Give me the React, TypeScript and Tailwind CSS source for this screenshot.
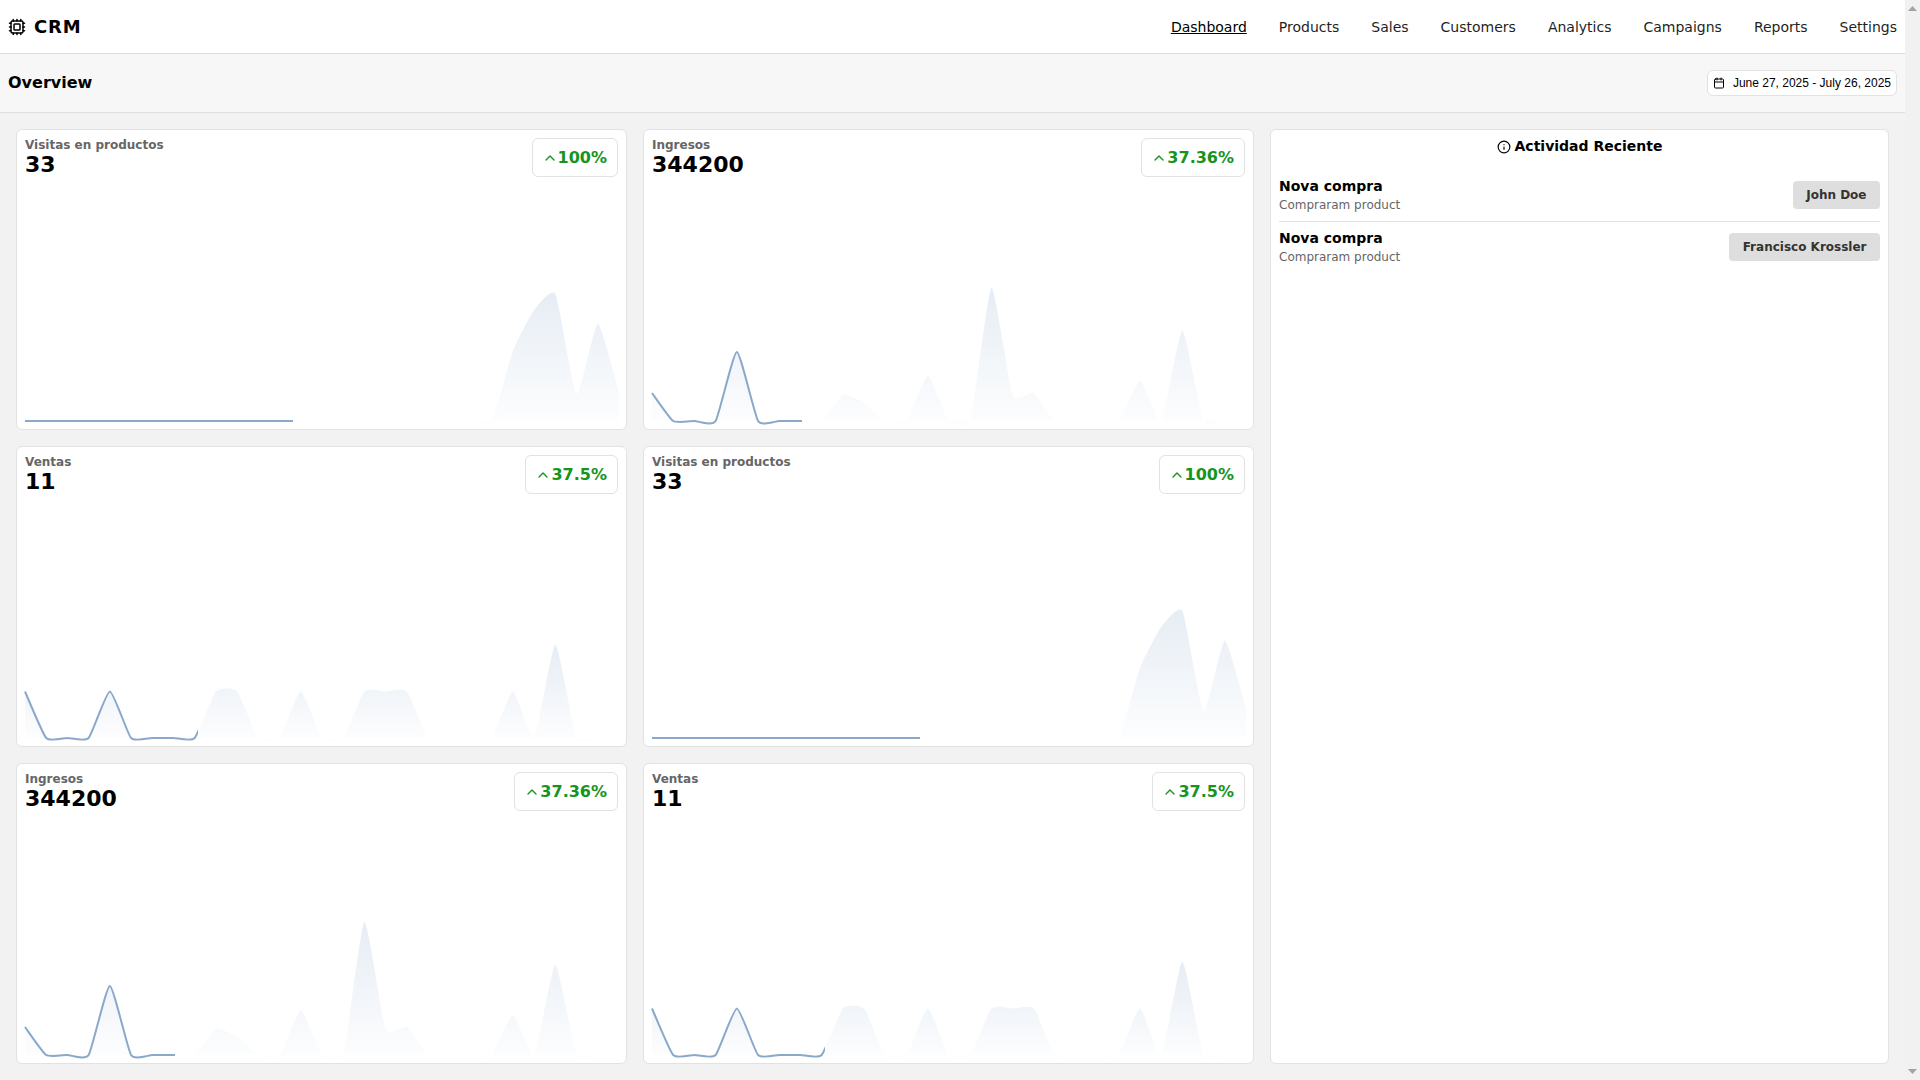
import { Calendar, ChevronUp, Cpu, Info } from "lucide-react";

const STEP = 594 / 28;
const BASE = 240;

// cardinal spline with tension .5, values are heights above the baseline
function curve(values: number[]) {
  const pts = values.map((v, i) => [i * STEP, BASE - v]);
  let d = `M${pts[0][0]},${pts[0][1]}`;
  for (let i = 0; i < pts.length - 1; i++) {
    const p0 = pts[Math.max(i - 1, 0)];
    const p1 = pts[i];
    const p2 = pts[i + 1];
    const p3 = pts[Math.min(i + 2, pts.length - 1)];
    const k = 0.5 / 6;
    d += `C${(p1[0] + k * (p2[0] - p0[0])).toFixed(2)},${(p1[1] + k * (p2[1] - p0[1])).toFixed(2)} ${(p2[0] - k * (p3[0] - p1[0])).toFixed(2)},${(p2[1] - k * (p3[1] - p1[1])).toFixed(2)} ${p2[0].toFixed(2)},${p2[1].toFixed(2)}`;
  }
  return d;
}

const visitas = [0, 0, 0, 0, 0, 0, 0, 0, 0, 0, 0, 0, 0, 0, 0, 0, 0, 0, 0, 0, 0, 0, 0, 70, 111, 127, 27, 97, 30];
const ingresos = [28, 0, 0, 0, 69, 0, 0, 0, 0, 26, 18, 0, 0, 45, 0, 0, 133, 26, 28, 0, 0, 0, 0, 40, 0, 90, 0, 0, 0];
const ventas = [46.5, 0, 0, 0, 46.5, 0, 0, 0, 0, 46.5, 46.5, 0, 0, 46.5, 0, 0, 46.5, 46.5, 46.5, 0, 0, 0, 0, 46.5, 0, 93, 0, 0, 0];

function Chart({ id, values, reveal }: { id: string; values: number[]; reveal: number }) {
  const d = curve(values);
  return (
    <svg viewBox="0 0 594 240" className="mt-auto -ml-[0.5px] h-[240px] w-[594px] overflow-visible">
      <defs>
        <linearGradient id={`fill-${id}`} x1="0" y1="0" x2="0" y2="1">
          <stop offset="5%" stopColor="#88a7cb" stopOpacity="0.2" />
          <stop offset="70%" stopColor="#88a7cb" stopOpacity="0.075" />
          <stop offset="100%" stopColor="#88a7cb" stopOpacity="0.012" />
        </linearGradient>
        <clipPath id={`clip-${id}`}>
          <rect x="-2" y="0" width={reveal + 2} height="250" />
        </clipPath>
      </defs>
      <path d={`${d}L594,${BASE}L0,${BASE}Z`} fill={`url(#fill-${id})`} />
      <path d={d} fill="none" stroke="#8aa8ca" strokeWidth="2" clipPath={`url(#clip-${id})`} />
    </svg>
  );
}

function StatCard({ id, label, value, delta, values, reveal }: { id: string; label: string; value: string; delta: string; values: number[]; reveal: number }) {
  return (
    <div className="flex flex-col rounded-md border border-[#e2e2e2] bg-white p-2">
      <div className="flex items-start justify-between">
        <div>
          <div className="text-xs leading-[14px] font-bold text-[#666666]">{label}</div>
          <div className="text-[22px] leading-[26px] font-bold text-black">{value}</div>
        </div>
        <div className="flex h-[39px] items-center rounded-md border border-[#e2e2e2] bg-white pr-2.5 pl-[9px] text-base font-bold text-[#16941c]">
          <ChevronUp size={16} strokeWidth={2} />
          {delta}
        </div>
      </div>
      <Chart id={id} values={values} reveal={reveal} />
    </div>
  );
}

function ActivityRow({ name }: { name: string }) {
  return (
    <div className="flex items-center justify-between">
      <div>
        <div className="text-sm leading-[20px] font-bold text-black">Nova compra</div>
        <div className="mt-px text-xs leading-[16px] text-[#666666]">Compraram product</div>
      </div>
      <div className="flex h-7 items-center rounded bg-[#dedede] px-[13.5px] text-xs font-bold text-[#333333]">{name}</div>
    </div>
  );
}

const nav = ["Dashboard", "Products", "Sales", "Customers", "Analytics", "Campaigns", "Reports", "Settings"];

export default function App() {
  return (
    <div className="flex h-screen overflow-hidden bg-[#f2f2f2] font-['DejaVu_Sans',sans-serif]">
      <div className="flex min-w-0 flex-1 flex-col">
        <header className="flex h-[54px] items-center justify-between border-b border-[#dedede] bg-white px-2">
          <div className="flex items-center gap-2 text-lg font-bold tracking-wider text-black">
            <Cpu size={18} />
            CRM
          </div>
          <nav className="flex gap-8 text-sm text-[#1f1f1f]">
            {nav.map((item, i) => (
              <a key={item} className={i === 0 ? "text-black underline" : ""}>{item}</a>
            ))}
          </nav>
        </header>
        <div className="flex h-[59px] items-center justify-between border-b border-[#dedede] bg-[#f7f7f7] px-2">
          <h1 className="text-base font-bold text-black">Overview</h1>
          <button className="flex h-[26px] items-center gap-2 rounded-md border border-[#e2e2e2] bg-white px-[5px] font-['Liberation_Sans',sans-serif] text-xs text-black">
            <Calendar size={12} />
            June 27, 2025 - July 26, 2025
          </button>
        </div>
        <main className="grid grid-cols-[611px_611px_1fr] grid-rows-[301px_301px_301px] gap-4 p-4">
          <StatCard id="a" label="Visitas en productos" value="33" delta="100%" values={visitas} reveal={268} />
          <StatCard id="b" label="Ingresos" value="344200" delta="37.36%" values={ingresos} reveal={150} />
          <section className="row-span-3 rounded-md border border-[#e2e2e2] bg-white p-2">
            <h2 className="mb-[21px] flex items-center justify-center gap-1 text-sm leading-[17px] font-bold text-black">
              <Info size={14} />
              Actividad Reciente
            </h2>
            <ActivityRow name="John Doe" />
            <div className="mt-2 mb-[6px] h-px bg-[#e2e2e2]" />
            <ActivityRow name="Francisco Krossler" />
          </section>
          <StatCard id="c" label="Ventas" value="11" delta="37.5%" values={ventas} reveal={173} />
          <StatCard id="d" label="Visitas en productos" value="33" delta="100%" values={visitas} reveal={268} />
          <StatCard id="e" label="Ingresos" value="344200" delta="37.36%" values={ingresos} reveal={150} />
          <StatCard id="f" label="Ventas" value="11" delta="37.5%" values={ventas} reveal={173} />
        </main>
      </div>
      <div className="flex w-[15px] flex-col items-center justify-between bg-[#f1f1f1] py-1.5 text-[#a3a3a3]">
        <svg width="9" height="5" viewBox="0 0 9 5"><polygon points="4.5,0 9,5 0,5" fill="currentColor" /></svg>
        <svg width="9" height="5" viewBox="0 0 9 5"><polygon points="0,0 9,0 4.5,5" fill="currentColor" /></svg>
      </div>
    </div>
  );
}
